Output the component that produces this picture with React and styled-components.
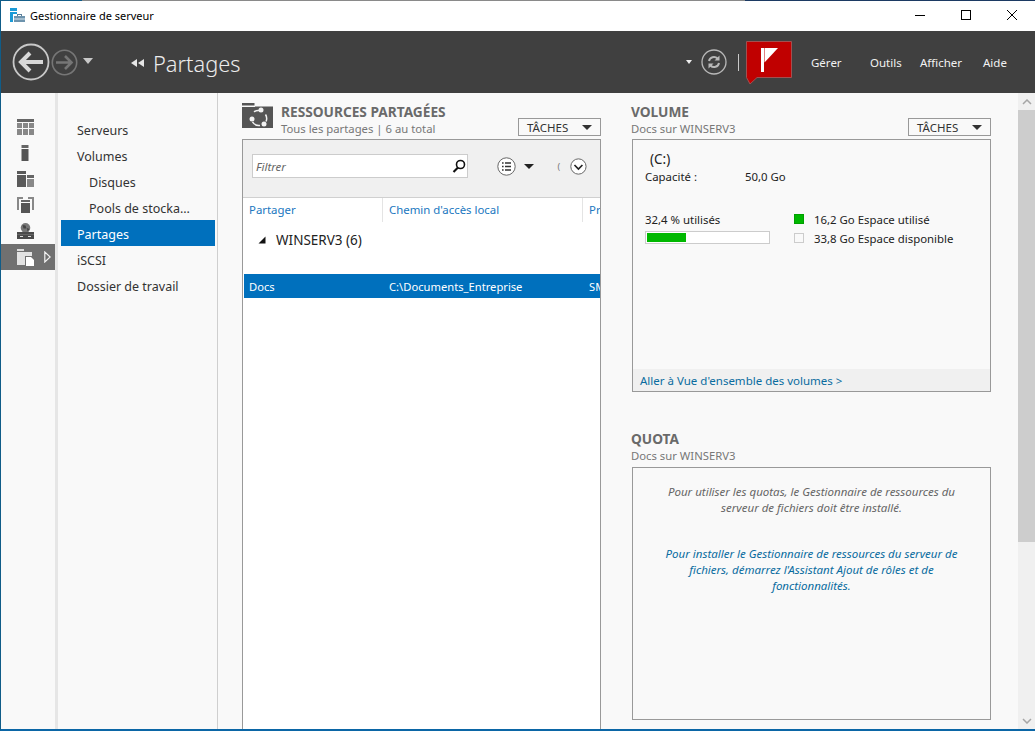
import React from 'react';
import styled, { createGlobalStyle } from 'styled-components';

const GlobalStyle = createGlobalStyle`
    html, body {
        margin: 0;
        padding: 0;
        background: #f9f9f9;
    }
    * {
        box-sizing: border-box;
    }
`;

const font = `"Noto Sans", "Open Sans", "Liberation Sans", sans-serif`;

const App = () => {
    return (
        <Frame>
            <GlobalStyle />
            <TopEdge />
            <TitleBar>
                <TitleLeft>
                    <AppIcon />
                    <span>Gestionnaire de serveur</span>
                </TitleLeft>
                <WindowButtons>
                    <WindowButton aria-label="Réduire"><svg width="12" height="12"><path d="M1 6.5h10" stroke="#000" /></svg></WindowButton>
                    <WindowButton aria-label="Agrandir"><svg width="12" height="12"><rect x="1.5" y="1.5" width="9" height="9" fill="none" stroke="#000" /></svg></WindowButton>
                    <WindowButton aria-label="Fermer"><svg width="12" height="12"><path d="M1 1l10 10M11 1L1 11" stroke="#000" /></svg></WindowButton>
                </WindowButtons>
            </TitleBar>
            <Header>
                <BackCircle>
                    <svg width="38" height="38" viewBox="0 0 38 38">
                        <circle cx="19" cy="19" r="17.5" fill="none" stroke="#c8c8c8" strokeWidth="1.8" />
                        <path d="M31 19H10M18 10l-9 9 9 9" fill="none" stroke="#d8d8d8" strokeWidth="4" />
                    </svg>
                </BackCircle>
                <ForwardCircle>
                    <svg width="27" height="27" viewBox="0 0 27 27">
                        <circle cx="13.5" cy="13.5" r="12.2" fill="none" stroke="#767676" strokeWidth="1.6" />
                        <path d="M5 13.5h15M14 7l6.5 6.5L14 20" fill="none" stroke="#767676" strokeWidth="2.6" />
                    </svg>
                </ForwardCircle>
                <HistoryCaret />
                <Breadcrumb>
                    <svg width="14" height="8" viewBox="0 0 14 8"><path d="M6 0v8L0 4zM13 0v8L7 4z" fill="#e6e6e6" /></svg>
                    <span>Partages</span>
                </Breadcrumb>
                <HeaderRight>
                    <SmallCaret />
                    <svg width="26" height="26" viewBox="0 0 26 26">
                        <circle cx="13" cy="13" r="12" fill="none" stroke="#b8b8b8" strokeWidth="1.3" />
                        <path d="M8 12a5 5 0 0 1 8.500-2.500M18 14a5 5 0 0 1-8.500 2.500" fill="none" stroke="#b8b8b8" strokeWidth="2" />
                        <path d="M18.500 6.500v5h-5zM7.500 19.500v-5h5z" fill="#b8b8b8" />
                    </svg>
                    <Separator />
                    <FlagBox>
                        <svg width="46" height="44" viewBox="0 0 46 44">
                            <path d="M.5.5h45v36H11L4 43 .5 36.500z" fill="#c00000" stroke="#a15050" />
                            <path d="M15 7h3v24h-3z" fill="#fff" />
                            <path d="M18.500 7H32L18.500 21.500z" fill="#fff" />
                        </svg>
                    </FlagBox>
                    <Menu>
                        <MenuItem $width={59}>Gérer</MenuItem>
                        <MenuItem $width={50}>Outils</MenuItem>
                        <MenuItem $width={63}>Afficher</MenuItem>
                        <MenuItem $width={28}>Aide</MenuItem>
                    </Menu>
                </HeaderRight>
            </Header>
            <Body>
                <IconRail>
                    <RailItem><RailIcon kind="dashboard" /></RailItem>
                    <RailItem><RailIcon kind="server" /></RailItem>
                    <RailItem><RailIcon kind="all" /></RailItem>
                    <RailItem><RailIcon kind="cluster" /></RailItem>
                    <RailItem><RailIcon kind="globe" /></RailItem>
                    <RailItem $active>
                        <RailIcon kind="share" />
                        <svg width="7" height="12" viewBox="0 0 7 12"><path d="M.8 1v10l5.400-5z" fill="none" stroke="#f2f2f2" strokeWidth="1.200" /></svg>
                    </RailItem>
                </IconRail>
                <RailShadow />
                <Nav>
                    <NavItem>Serveurs</NavItem>
                    <NavItem>Volumes</NavItem>
                    <NavItem $sub>Disques</NavItem>
                    <NavItem $sub>Pools de stocka...</NavItem>
                    <NavItem $active>Partages</NavItem>
                    <NavItem>iSCSI</NavItem>
                    <NavItem>Dossier de travail</NavItem>
                </Nav>
                <Content>
                    <Column>
                        <SectionHead>
                            <SectionIcon />
                            <SectionText>
                                <SectionTitle>RESSOURCES PARTAGÉES</SectionTitle>
                                <SectionSub>Tous les partages | 6 au total</SectionSub>
                            </SectionText>
                            <Tasks>TÂCHES<TaskCaret /></Tasks>
                        </SectionHead>
                        <SharesPanel>
                            <Toolbar>
                                <Filter>
                                    <em>Filtrer</em>
                                    <svg width="14" height="14" viewBox="0 0 14 14">
                                        <circle cx="8.5" cy="5.5" r="4" fill="none" stroke="#111" strokeWidth="1.6" />
                                        <path d="M6 8.5L1.5 13" stroke="#111" strokeWidth="2.2" />
                                    </svg>
                                </Filter>
                                <ViewGroup>
                                    <svg width="19" height="19" viewBox="0 0 19 19">
                                        <circle cx="9.5" cy="9.5" r="8.7" fill="#fff" stroke="#666" />
                                        <path d="M5 6h1.6M8 6h6M5 9.5h1.6M8 9.5h6M5 13h1.6M8 13h6" stroke="#333" strokeWidth="1.6" />
                                    </svg>
                                    <DarkCaret />
                                </ViewGroup>
                                <Paren>(</Paren>
                                <svg width="17" height="17" viewBox="0 0 17 17">
                                    <circle cx="8.5" cy="8.5" r="7.7" fill="#fff" stroke="#666" />
                                    <path d="M4.5 7l4 4 4-4" fill="none" stroke="#222" strokeWidth="1.7" />
                                </svg>
                            </Toolbar>
                            <ColumnHeads>
                                <ColumnHead $width={140}>Partager</ColumnHead>
                                <ColumnHead $width={200}>Chemin d'accès local</ColumnHead>
                                <ColumnHead $width={20}>Pr</ColumnHead>
                            </ColumnHeads>
                            <GroupRow>
                                <svg width="8" height="8" viewBox="0 0 8 8"><path d="M7.500 .5v7H.5z" fill="#111" /></svg>
                                <span>WINSERV3 (6)</span>
                            </GroupRow>
                            <SelectedRow>
                                <Cell $width={140}>Docs</Cell>
                                <Cell $width={200}>C:\Documents_Entreprise</Cell>
                                <Cell $width={16}>SMB</Cell>
                            </SelectedRow>
                        </SharesPanel>
                    </Column>
                    <Column>
                        <SectionHead>
                            <SectionText $flush>
                                <SectionTitle>VOLUME</SectionTitle>
                                <SectionSub>Docs sur WINSERV3</SectionSub>
                            </SectionText>
                            <Tasks>TÂCHES<TaskCaret /></Tasks>
                        </SectionHead>
                        <VolumePanel>
                            <VolumeBody>
                                <DriveName>(C:)</DriveName>
                                <Capacity>
                                    <span>Capacité :</span>
                                    <span>50,0 Go</span>
                                </Capacity>
                                <Usage>
                                    <UsageLeft>
                                        <div>32,4 % utilisés</div>
                                        <Bar><BarFill style={{ width: '32.4%' }} /></Bar>
                                    </UsageLeft>
                                    <Legend>
                                        <LegendRow><Swatch $used />16,2 Go Espace utilisé</LegendRow>
                                        <LegendRow><Swatch />33,8 Go Espace disponible</LegendRow>
                                    </Legend>
                                </Usage>
                            </VolumeBody>
                            <PanelFooter>Aller à Vue d'ensemble des volumes &gt;</PanelFooter>
                        </VolumePanel>
                        <QuotaHead>
                            <SectionText $flush>
                                <SectionTitle>QUOTA</SectionTitle>
                                <SectionSub>Docs sur WINSERV3</SectionSub>
                            </SectionText>
                        </QuotaHead>
                        <QuotaPanel>
                            <QuotaNote>Pour utiliser les quotas, le Gestionnaire de ressources du serveur de fichiers doit être installé.</QuotaNote>
                            <QuotaLink>Pour installer le Gestionnaire de ressources du serveur de fichiers, démarrez l'Assistant Ajout de rôles et de fonctionnalités.</QuotaLink>
                        </QuotaPanel>
                    </Column>
                </Content>
                <Scrollbar>
                    <ScrollButton>
                        <svg width="10" height="6" viewBox="0 0 10 6"><path d="M1 5l4-4 4 4" fill="none" stroke="#a6a6a6" strokeWidth="1.5" /></svg>
                    </ScrollButton>
                    <ScrollThumb />
                    <ScrollTrack />
                    <ScrollButton>
                        <svg width="10" height="6" viewBox="0 0 10 6"><path d="M1 1l4 4 4-4" fill="none" stroke="#a6a6a6" strokeWidth="1.5" /></svg>
                    </ScrollButton>
                </Scrollbar>
            </Body>
        </Frame>
    );
};

const AppIcon = () => (
    <svg width="15" height="14" viewBox="0 0 15 14">
        <path d="M0 0h7v3H0zM0 4h7v2H0zM0 6h3v8H0z" fill="#1b9ad6" />
        <path d="M7 8V6h5v2h-1V7H8v1z" fill="#5a7f9a" />
        <path d="M4 8h11v6H4z" fill="#6d93ad" />
        <path d="M4 10.500h11v1H4z" fill="#dce6ee" />
    </svg>
);

const RailIcon = ({ kind }) => {
    if (kind === 'dashboard') {
        return (
            <svg width="17" height="16" viewBox="0 0 17 16">
                <path d="M0 0h17v3H0z" fill="#666" />
                <path d="M0 4h5v5H0zM0 10h5v6H0zM6 4h5v5H6zM6 10h5v6H6zM12 4h5v5h-5zM12 10h5v6h-5z" fill="#888" />
            </svg>
        );
    }
    if (kind === 'server') {
        return (
            <svg width="17" height="16" viewBox="0 0 17 16">
                <path d="M4.500 0h7v3h-7z" fill="#666" />
                <path d="M4.500 4h7v12h-7z" fill="#555" />
            </svg>
        );
    }
    if (kind === 'all') {
        return (
            <svg width="17" height="16" viewBox="0 0 17 16">
                <path d="M0 0h9v3H0zM0 4h9v12H0z" fill="#5a5a5a" />
                <path d="M10 4h7v3h-7z" fill="#666" />
                <path d="M10 8h7v8h-7z" fill="#888" />
            </svg>
        );
    }
    if (kind === 'cluster') {
        return (
            <svg width="17" height="16" viewBox="0 0 17 16">
                <path d="M0 0h6v2H2v11H0zM11 0h6v13h-2V2h-4z" fill="#888" />
                <path d="M4 3h9v2H4z" fill="#666" />
                <path d="M4 6h9v10H4z" fill="#555" />
            </svg>
        );
    }
    if (kind === 'globe') {
        return (
            <svg width="17" height="16" viewBox="0 0 17 16">
                <circle cx="8.500" cy="4.800" r="4.800" fill="#777" />
                <path d="M5.500 2l3 .5 1 3-3 0zM10 5l2.500 1-2 2.500z" fill="#444" />
                <path d="M0 9h17v7H0z" fill="#4a4a4a" />
                <path d="M0 11h17v.6H0z" fill="#777" />
                <path d="M3 13h3v1H3zM11 13h3v1h-3z" fill="#ddd" />
            </svg>
        );
    }
    return (
        <svg width="17" height="17" viewBox="0 0 17 17">
            <path d="M0 2V0h7v2z" fill="#dcdcdc" />
            <path d="M0 3h15v4H8v9H0z" fill="#e2e2e2" />
            <path d="M9 8h5l3 3v6H9z" fill="#fff" />
        </svg>
    );
};

const SectionIcon = () => (
    <svg width="31" height="25" viewBox="0 0 31 25">
        <path d="M0 2.500V0h12.500v2.500zM13 3.500h18V25H0V4h13z" fill="#555" />
        <path d="M12 8.800A7.500 7.500 0 0 1 17 7.500M23.500 11.500a7.500 7.500 0 0 1 .5 7M18 22.400a7.500 7.500 0 0 1-7.500-3.500" fill="none" stroke="#f2f2f2" strokeWidth="1.500" />
        <circle cx="19" cy="7" r="2.500" fill="#f2f2f2" />
        <circle cx="10" cy="16" r="2.500" fill="#f2f2f2" />
        <circle cx="22" cy="21" r="2.500" fill="#f2f2f2" />
    </svg>
);

const Frame = styled.div`
    width: 1035px;
    height: 731px;
    display: flex;
    flex-direction: column;
    overflow: hidden;
    font-family: ${font};
    font-size: 12px;
    background: #f9f9f9;
    border-left: 1px solid #0f5c88;
    border-bottom: 2px solid #0b66a6;
`;

const TopEdge = styled.div`
    height: 1px;
    margin-left: -1px;
    flex-shrink: 0;
    background: linear-gradient(to right, #0f5c88 0, #0f5c88 82px, #8a8a8a 82px, #8a8a8a 745px, #1c3a63 745px);
`;

const TitleBar = styled.div`
    height: 30px;
    flex-shrink: 0;
    display: flex;
    align-items: center;
    justify-content: space-between;
    background: #fff;
    color: #000;
`;

const TitleLeft = styled.div`
    display: flex;
    align-items: center;
    gap: 5px;
    padding: 0 0 2px 9px;
    font-size: 11px;
`;

const WindowButtons = styled.div`
    display: flex;
`;

const WindowButton = styled.div`
    width: 46px;
    height: 30px;
    padding-bottom: 2px;
    display: flex;
    align-items: center;
    justify-content: center;
`;

const Header = styled.div`
    height: 62px;
    flex-shrink: 0;
    display: flex;
    align-items: center;
    background: #404040;
    color: #f0f0f0;
    padding-left: 11px;
`;

const BackCircle = styled.div`
    height: 38px;
    display: flex;
`;

const ForwardCircle = styled.div`
    height: 27px;
    display: flex;
    margin-left: 1px;
`;

const HistoryCaret = styled.div`
    margin-left: 5px;
    margin-bottom: 2px;
    border-top: 6px solid #c8c8c8;
    border-left: 5.5px solid transparent;
    border-right: 5.5px solid transparent;
`;

const Breadcrumb = styled.div`
    display: flex;
    align-items: center;
    gap: 8px;
    margin-left: 38px;
    padding-top: 2px;
    font-size: 21.800px;
    font-weight: 300;
    color: #ececec;
`;

const HeaderRight = styled.div`
    margin-left: auto;
    display: flex;
    align-items: center;
`;

const SmallCaret = styled.div`
    margin-right: 9px;
    border-top: 4px solid #eee;
    border-left: 3.5px solid transparent;
    border-right: 3.5px solid transparent;
`;

const Separator = styled.div`
    width: 1px;
    height: 17px;
    margin: 0 7px 0 11px;
    background: #c8c8c8;
`;

const FlagBox = styled.div`
    height: 44px;
    margin-top: 2px;
    display: flex;
`;

const Menu = styled.div`
    display: flex;
    align-items: center;
    padding-left: 19px;
    padding-right: 24px;
`;

const MenuItem = styled.div`
    width: ${p => p.$width}px;
    font-size: 11.500px;
    color: #f2f2f2;
    white-space: nowrap;
`;

const Body = styled.div`
    flex: 1;
    min-height: 0;
    display: flex;
`;

const IconRail = styled.div`
    width: 54px;
    padding-top: 21px;
    background: #f9f9f9;
`;

const RailItem = styled.div`
    height: 26px;
    display: flex;
    align-items: center;
    padding-left: 16px;
    gap: 10px;
    background: ${p => (p.$active ? '#707070' : 'transparent')};
`;

const RailShadow = styled.div`
    width: 3px;
    background: #e6e6e6;
`;

const Nav = styled.div`
    width: 160px;
    padding: 23px 2px 0 3px;
    border-right: 1px solid #cfcfcf;
    background: #f9f9f9;
`;

const NavItem = styled.div`
    height: 26px;
    display: flex;
    align-items: center;
    padding-left: ${p => (p.$sub ? 28 : 16)}px;
    padding-top: 2px;
    font-size: 12.500px;
    white-space: nowrap;
    color: ${p => (p.$active ? '#fff' : '#333')};
    background: ${p => (p.$active ? '#0070bd' : 'transparent')};
`;

const Content = styled.div`
    flex: 1;
    min-width: 0;
    display: flex;
    gap: 31px;
    padding-left: 24px;
`;

const Column = styled.div`
    width: 359px;
    padding-top: 9px;
    display: flex;
    flex-direction: column;
`;

const SectionHead = styled.div`
    height: 36px;
    display: flex;
    align-items: flex-start;
    position: relative;
    gap: 8px;
    margin-top: 1px;
`;

const SectionText = styled.div`
    display: flex;
    flex-direction: column;
    margin-left: ${p => (p.$flush ? -1 : 0)}px;
`;

const SectionTitle = styled.div`
    font-size: 13.700px;
    font-weight: 700;
    line-height: 17px;
    color: #6a6a6a;
    white-space: nowrap;
`;

const SectionSub = styled.div`
    font-size: 11.300px;
    line-height: 17px;
    color: #777;
    white-space: nowrap;
`;

const Tasks = styled.div`
    position: absolute;
    right: 0;
    bottom: 3px;
    width: 83px;
    height: 18px;
    display: flex;
    align-items: center;
    padding: 0 8px 0 8px;
    justify-content: space-between;
    font-size: 11.500px;
    color: #333;
    background: #f9f9f9;
    border: 1px solid #999;
`;

const TaskCaret = styled.span`
    border-top: 5px solid #333;
    border-left: 5px solid transparent;
    border-right: 5px solid transparent;
`;

const SharesPanel = styled.div`
    flex: 1;
    min-height: 0;
    overflow: hidden;
    background: #fff;
    border: 1px solid #999;
    border-bottom: none;
`;

const Toolbar = styled.div`
    height: 58px;
    display: flex;
    align-items: center;
    padding: 0 13px 5px 9px;
    background: #f0f0f0;
    border-bottom: 1px solid #d0d0d0;
`;

const Filter = styled.div`
    width: 218px;
    height: 24px;
    display: flex;
    align-items: center;
    justify-content: space-between;
    padding: 0 1px 0 3px;
    background: #fff;
    border: 1px solid #ccc;
    color: #666;
    font-size: 11.500px;
`;

const ViewGroup = styled.div`
    display: flex;
    align-items: center;
    gap: 8px;
    margin-left: 29px;
`;

const DarkCaret = styled.span`
    border-top: 5px solid #222;
    border-left: 5.500px solid transparent;
    border-right: 5.500px solid transparent;
`;

const Paren = styled.span`
    margin-left: 23px;
    margin-right: 10px;
    font-size: 9px;
    color: #777;
`;

const ColumnHeads = styled.div`
    height: 24px;
    display: flex;
    overflow: hidden;
    white-space: nowrap;
`;

const ColumnHead = styled.div`
    flex: 0 0 ${p => p.$width}px;
    height: 100%;
    padding: 4px 0 0 6px;
    font-size: 11.400px;
    color: #2077c0;
    border-right: 1px solid #e4e4e4;
`;

const GroupRow = styled.div`
    height: 36px;
    display: flex;
    align-items: center;
    gap: 10px;
    padding: 0 0 0 15px;
    font-size: 13.500px;
    color: #222;
`;

const SelectedRow = styled.div`
    height: 24px;
    margin: 16px 0 0 1px;
    display: flex;
    align-items: center;
    overflow: hidden;
    white-space: nowrap;
    background: #0070bd;
    color: #fff;
    font-size: 11.200px;
`;

const Cell = styled.div`
    flex: 0 0 ${p => p.$width}px;
    padding-left: 5px;
`;

const VolumePanel = styled.div`
    height: 253px;
    display: flex;
    flex-direction: column;
    flex-shrink: 0;
    border: 1px solid #999;
    background: #f9f9f9;
`;

const VolumeBody = styled.div`
    flex: 1;
    padding: 10px 12px 0;
    color: #222;
    font-size: 11.400px;
`;

const DriveName = styled.div`
    padding-left: 5px;
    line-height: 18px;
    font-size: 13.500px;
`;

const Capacity = styled.div`
    display: grid;
    grid-template-columns: 100px auto;
    line-height: 18px;
`;

const Usage = styled.div`
    display: flex;
    margin-top: 25px;
`;

const UsageLeft = styled.div`
    width: 149px;
    line-height: 18px;
`;

const Bar = styled.div`
    width: 125px;
    height: 13px;
    margin-top: 2px;
    padding: 1px;
    background: #fff;
    border: 1px solid #ccc;
`;

const BarFill = styled.div`
    height: 100%;
    background: #00b800;
`;

const Legend = styled.div`
    display: flex;
    flex-direction: column;
    gap: 1px;
    margin-top: -1px;
`;

const LegendRow = styled.div`
    height: 18px;
    display: flex;
    align-items: center;
    gap: 10px;
`;

const Swatch = styled.span`
    width: 10px;
    height: 10px;
    background: ${p => (p.$used ? '#00b800' : '#f9f9f9')};
    border: 1px solid ${p => (p.$used ? '#00a000' : '#ccc')};
`;

const PanelFooter = styled.div`
    height: 22px;
    display: flex;
    align-items: center;
    padding-left: 7px;
    background: #f0f0f0;
    color: #0a6c9f;
    font-size: 11.500px;
`;

const QuotaHead = styled.div`
    margin-top: 38px;
    height: 37px;
`;

const QuotaPanel = styled.div`
    height: 253px;
    flex-shrink: 0;
    padding: 16px 20px 0;
    border: 1px solid #999;
    text-align: center;
    font-style: italic;
    font-size: 11.500px;
    line-height: 16px;
`;

const QuotaNote = styled.div`
    color: #666;
    padding: 0 8px;
`;

const QuotaLink = styled.div`
    margin-top: 30px;
    color: #0a6c9f;
`;

const Scrollbar = styled.div`
    width: 17px;
    flex-shrink: 0;
    margin-left: auto;
    display: flex;
    flex-direction: column;
    background: #f0f0f0;
`;

const ScrollButton = styled.div`
    height: 17px;
    flex-shrink: 0;
    display: flex;
    align-items: center;
    justify-content: center;
`;

const ScrollThumb = styled.div`
    height: 432px;
    flex-shrink: 0;
    background: #cdcdcd;
`;

const ScrollTrack = styled.div`
    flex: 1;
`;

export default App;
